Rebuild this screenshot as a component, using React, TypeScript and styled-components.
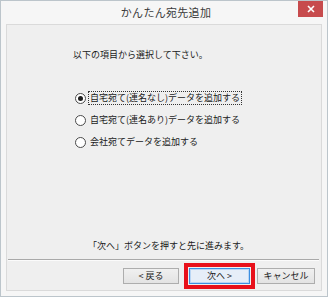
import React from 'react';
import styled, { createGlobalStyle } from 'styled-components';

const GlobalStyle = createGlobalStyle`
  html, body {
    margin: 0;
    padding: 0;
    background: #ffffff;
  }
  body {
    font-family: "Noto Sans CJK JP", "Noto Sans", sans-serif;
  }
`;

const Window = styled.div`
  box-sizing: border-box;
  width: 328px;
  height: 297px;
  border: 1px solid #bcc5cb;
  background: #f6f6f6;
  display: flex;
  flex-direction: column;
  padding: 0 5px 5px 5px;
`;

const TitleBar = styled.div`
  height: 23px;
  display: grid;
  grid-template-columns: 1fr auto 1fr;
  align-items: start;
  margin: 0 -1px 0 0;
`;

const Title = styled.div`
  grid-column: 2;
  font-size: 11px;
  line-height: 23px;
  color: #3a3a3a;
  letter-spacing: 0.3px;
  padding-left: 3px;
`;

const CloseButton = styled.div`
  grid-column: 3;
  justify-self: end;
  width: 25px;
  height: 16px;
  background: #c74b4d;
  display: flex;
  align-items: center;
  justify-content: center;
`;

const Panel = styled.div`
  flex: 1;
  box-sizing: border-box;
  border: 1px solid #dadada;
  background: #efefef;
  display: flex;
  flex-direction: column;
`;

const Body = styled.div`
  flex: 1;
  padding: 24px 0 0 66px;
  display: flex;
  flex-direction: column;
  font-size: 9px;
  color: #1a1a1a;
`;

const Instruction = styled.div`
  line-height: 12px;
  height: 12px;
`;

const OptionList = styled.div`
  margin-top: 26px;
  display: flex;
  flex-direction: column;
`;

const Option = styled.label`
  height: 22px;
  display: flex;
  align-items: center;
  padding-left: 2px;
`;

const Radio = styled.span<{ $checked?: boolean }>`
  box-sizing: border-box;
  width: 11px;
  height: 11px;
  border-radius: 50%;
  border: 1px solid #4a4a4a;
  background: #ffffff;
  display: flex;
  align-items: center;
  justify-content: center;
  margin-right: 2px;
  &::after {
    content: '';
    display: ${(p) => (p.$checked ? 'block' : 'none')};
    width: 5px;
    height: 5px;
    border-radius: 50%;
    background: #1e1e1e;
  }
`;

const OptionText = styled.span<{ $focused?: boolean }>`
  line-height: 12px;
  padding: 0 1px;
  border: 1px dotted ${(p) => (p.$focused ? '#333333' : 'transparent')};
`;

const Note = styled.div`
  margin-top: auto;
  margin-left: 15px;
  margin-bottom: 7px;
  line-height: 12px;
`;

const Separator = styled.div`
  margin: 0 2px 0 1px;
  height: 1px;
  background: #a9a9a9;
  border-bottom: 1px solid #fbfbfb;
`;

const Footer = styled.div`
  display: flex;
  justify-content: flex-end;
  padding: 7px 6px 6px 0;
`;

const Button = styled.button<{ $width: number; $default?: boolean; $gap?: number }>`
  box-sizing: border-box;
  width: ${(p) => p.$width}px;
  height: 16px;
  margin: 0 ${(p) => p.$gap ?? 0}px 0 0;
  padding: 0;
  font-family: "Noto Sans CJK JP", "Noto Sans", sans-serif;
  font-size: 9px;
  line-height: 14px;
  color: #1a1a1a;
  border: 1px solid ${(p) => (p.$default ? '#3c8fe0' : '#adadad')};
  background: ${(p) => (p.$default ? '#e6eef8' : 'linear-gradient(#f0f0f0, #e3e3e3)')};
  box-shadow: ${(p) => (p.$default ? 'inset 0 0 0 1px #b9d6f5' : 'none')};
`;

const HighlightedButton = styled(Button)`
  outline: 4px solid #e8101a;
  outline-offset: 1px;
`;

const CloseIcon = () => (
  <svg width="8" height="8" viewBox="0 0 8 8">
    <path d="M1 1 L7 7 M7 1 L1 7" stroke="#ffffff" strokeWidth="1.6" />
  </svg>
);

const options = [
  { label: '自宅宛て(連名なし)データを追加する', checked: true },
  { label: '自宅宛て(連名あり)データを追加する', checked: false },
  { label: '会社宛てデータを追加する', checked: false },
];

const App: React.FC = () => {
  return (
    <>
      <GlobalStyle />
      <Window>
        <TitleBar>
          <Title>かんたん宛先追加</Title>
          <CloseButton>
            <CloseIcon />
          </CloseButton>
        </TitleBar>
        <Panel>
          <Body>
            <Instruction>以下の項目から選択して下さい。</Instruction>
            <OptionList>
              {options.map((option, index) => (
                <Option key={index}>
                  <Radio $checked={option.checked} />
                  <OptionText $focused={option.checked}>{option.label}</OptionText>
                </Option>
              ))}
            </OptionList>
            <Note>「次へ」ボタンを押すと先に進みます。</Note>
          </Body>
          <Separator />
          <Footer>
            <Button $width={56} $gap={10}>
              &lt; 戻る
            </Button>
            <HighlightedButton $width={61} $default $gap={7}>
              次へ &gt;
            </HighlightedButton>
            <Button $width={58}>キャンセル</Button>
          </Footer>
        </Panel>
      </Window>
    </>
  );
};

export default App;
